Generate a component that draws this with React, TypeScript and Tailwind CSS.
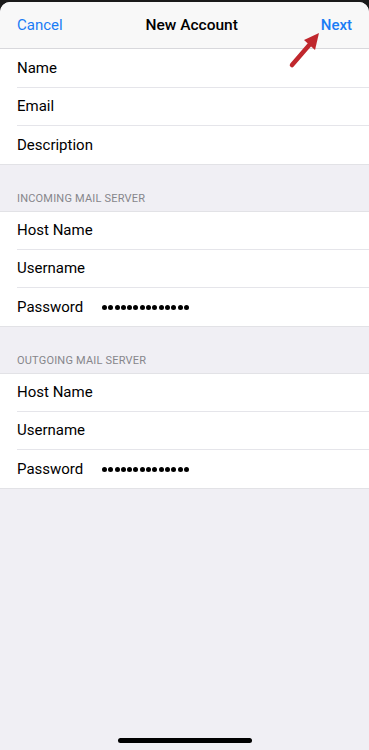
import React from "react";

const Row = ({ label, value, last }: { label: string; value?: React.ReactNode; last?: boolean }) => (
  <div className="pl-[17px] bg-white">
    <div className={`h-[38px] flex items-center ${last ? "" : "border-b border-[#e5e5ea]"}`}>
      <span className="w-[85px] text-[15px] text-black">{label}</span>
      {value}
    </div>
  </div>
);

const Dots = () => (
  <div className="flex gap-[1.3px] mt-[1px]">
    {Array.from({ length: 14 }).map((_, i) => (
      <div key={i} className="w-[5px] h-[5px] rounded-full bg-black" />
    ))}
  </div>
);

const Section = ({ title, children }: { title: string; children: React.ReactNode }) => (
  <div>
    <div className="h-[46px] flex items-end pl-[17px] pb-[4px] bg-[#f0eff4]">
      <span className="text-[11px] text-[#86868b] tracking-[0.2px]">{title}</span>
    </div>
    <div className="border-t border-b border-[#e2e2e6] bg-white">{children}</div>
  </div>
);

export default function App() {
  return (
    <div className="w-[369px] h-[750px] bg-[#1a1a1a] pt-[2px] overflow-hidden" style={{ fontFamily: "Roboto, 'Noto Sans', sans-serif" }}>
      <div className="relative h-[748px] rounded-t-[10px] bg-[#f0eff4] overflow-hidden flex flex-col">
        <div className="h-[47px] bg-[#f8f8f8] border-b border-[#d8d8dc] flex items-center justify-between px-[17px] pt-[1px]">
          <span className="text-[15px] text-[#1a7cf5]">Cancel</span>
          <span className="text-[15.5px] font-medium text-black">New Account</span>
          <span className="text-[15px] text-[#1a7cf5] font-medium">Next</span>
        </div>
        <div className="bg-white border-b border-[#e2e2e6] pt-[1px]">
          <Row label="Name" />
          <Row label="Email" />
          <Row label="Description" last />
        </div>
        <Section title="INCOMING MAIL SERVER">
          <Row label="Host Name" />
          <Row label="Username" />
          <Row label="Password" value={<Dots />} last />
        </Section>
        <Section title="OUTGOING MAIL SERVER">
          <Row label="Host Name" />
          <Row label="Username" />
          <Row label="Password" value={<Dots />} last />
        </Section>
        <div className="flex-1" />
        <div className="h-[12px] flex justify-center">
          <div className="w-[134px] h-[5px] rounded-full bg-black" />
        </div>
        <svg className="absolute left-[286px] top-[26px]" width="40" height="44" viewBox="0 0 40 44">
          <line x1="6" y1="37" x2="25" y2="15" stroke="#c0272d" strokeWidth="4.5" strokeLinecap="round" />
          <polygon points="33,5 18,12 29,22" fill="#c0272d" />
        </svg>
      </div>
    </div>
  );
}
